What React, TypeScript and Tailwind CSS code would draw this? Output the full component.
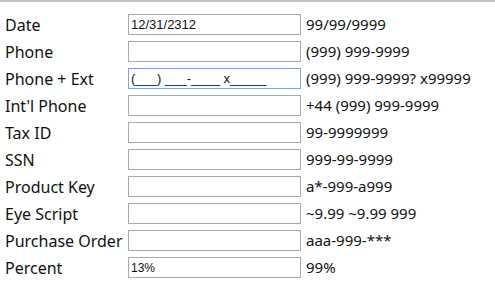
import React from 'react';

interface Row {
  label: string;
  value: string;
  mask: string;
  focused?: boolean;
  small?: boolean;
}

const rows: Row[] = [
  { label: 'Date', value: '12/31/2312', mask: '99/99/9999' },
  { label: 'Phone', value: '', mask: '(999) 999-9999' },
  { label: 'Phone + Ext', value: '(___) ___-____ x_____', mask: '(999) 999-9999? x99999', focused: true },
  { label: "Int'l Phone", value: '', mask: '+44 (999) 999-9999' },
  { label: 'Tax ID', value: '', mask: '99-9999999' },
  { label: 'SSN', value: '', mask: '999-99-9999' },
  { label: 'Product Key', value: '', mask: 'a*-999-a999' },
  { label: 'Eye Script', value: '', mask: '~9.99 ~9.99 999' },
  { label: 'Purchase Order', value: '', mask: 'aaa-999-***' },
  { label: 'Percent', value: '13%', mask: '99%', small: true },
];

export default function App() {
  return (
    <div className="w-[495px] h-[283px] bg-white overflow-hidden font-['Noto_Sans',sans-serif] text-[#111]">
      <div className="h-[2px] bg-[#c4c4c4]" />
      <div className="pt-[9px] pl-[5px]">
        {rows.map((r) => (
          <div key={r.label} className="flex items-center h-[27px]">
            <div className="w-[123px] text-[16px] leading-none whitespace-nowrap">{r.label}</div>
            <div
              className={
                'w-[173px] h-[21px] border flex items-center px-[2px] font-["Liberation_Sans",Arial,sans-serif] ' +
                (r.focused ? 'border-[#7aa7e0]' : 'border-[#a9a9a9]')
              }
            >
              <span className={r.small ? 'text-[12px]' : 'text-[13px]'}>{r.value}</span>
            </div>
            <div className="pl-[5px] text-[15px] leading-none whitespace-nowrap">{r.mask}</div>
          </div>
        ))}
      </div>
    </div>
  );
}
